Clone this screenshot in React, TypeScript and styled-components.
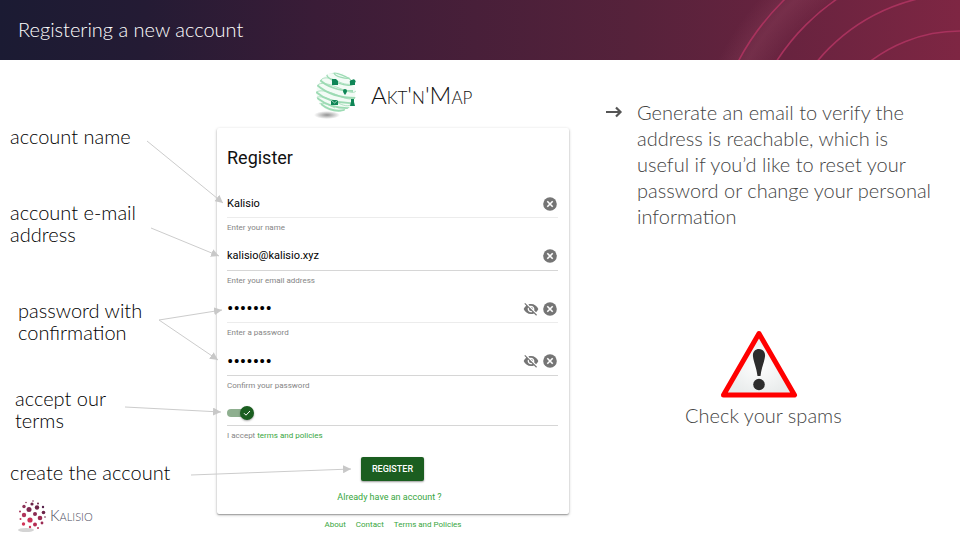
import React, { useState } from "react";
import styled, { createGlobalStyle } from "styled-components";

const GlobalStyle = createGlobalStyle`
  * { box-sizing: border-box; }
  body { margin: 0; background: #fff; font-family: Lato, "Open Sans", sans-serif; }
  #root { overflow-x: hidden; }
`;

const Slide = styled.main`
  min-height: 100vh;
  background: #fff;
`;

const Header = styled.header`
  position: relative;
  display: flex;
  align-items: center;
  height: 60px;
  padding: 0 18px 2px;
  background: linear-gradient(90deg, #1b1b33 0%, #241b34 15%, #3a1c37 33%, #56223b 66%, #68233f 82%, #7e2643 100%);
`;

const Rings = styled.svg`
  position: absolute;
  top: 0;
  right: 0;
`;

const HeaderTitle = styled.h1`
  margin: 0;
  color: #fff;
  font-size: 20px;
  font-weight: 300;
  line-height: 24px;
`;

const Body = styled.div`
  position: relative;
  display: grid;
  grid-template-columns: 217fr 352fr 391fr;
`;

const Arrows = styled.svg`
  position: absolute;
  top: 0;
  left: 0;
  width: 100%;
  height: 480px;
  pointer-events: none;
`;

const Notes = styled.section`
  display: flex;
  flex-direction: column;
  align-items: flex-start;
  padding: 65px 0 0 10px;
`;

const Note = styled.p<{ $gap?: number; $indent?: number }>`
  margin: ${(p) => p.$gap ?? 0}px 0 0 ${(p) => p.$indent ?? 0}px;
  color: #000;
  font-size: 20px;
  font-weight: 300;
  line-height: 22px;
  white-space: nowrap;
`;

const Brand = styled.div`
  display: flex;
  align-items: center;
  gap: 2px;
  margin: 16px 0 0 8px;
`;

const BrandName = styled.span`
  padding-bottom: 3px;
  color: #4a4a5c;
  font-size: 15px;
  font-weight: 300;
  line-height: 16px;
  font-variant: small-caps;
`;

const Center = styled.section`
  display: flex;
  flex-direction: column;
  font-family: Roboto, sans-serif;
`;

const AppLogo = styled.div`
  display: flex;
  align-items: center;
  gap: 12px;
  height: 50px;
  margin: 10px 0 8px 96px;
`;

const AppName = styled.span`
  color: #111;
  font-family: Lato, sans-serif;
  font-size: 24px;
  font-weight: 300;
  line-height: 26px;
  font-variant: small-caps;
`;

const Card = styled.form`
  display: flex;
  flex-direction: column;
  padding: 16px 11px 9px 10px;
  border-radius: 2px;
  background: #fff;
  box-shadow: 0 1px 3px rgba(0, 0, 0, 0.3), 0 1px 1px rgba(0, 0, 0, 0.2);
`;

const CardTitle = styled.h2`
  margin: 0 0 18px;
  color: #111;
  font-size: 18px;
  font-weight: 400;
  line-height: 28px;
`;

const Fields = styled.div`
  display: grid;
  grid-auto-rows: 1fr;
  min-height: 210px;
`;

const Control = styled.div<{ $height: number; $faint?: boolean }>`
  display: flex;
  align-items: center;
  gap: 4px;
  height: ${(p) => p.$height}px;
  padding-right: 1px;
  border-bottom: 1px solid ${(p) => (p.$faint ? "#ececec" : "#d6d6d6")};
`;

const TextInput = styled.input`
  flex: 1;
  min-width: 0;
  padding: 0;
  border: 0;
  outline: 0;
  background: none;
  color: #000;
  font: 400 11px/16px Roboto, sans-serif;
  &[type="password"] { font-size: 19px; }
`;

const IconButton = styled.button`
  display: flex;
  padding: 0;
  border: 0;
  background: none;
  color: #757575;
  cursor: pointer;
`;

const Hint = styled.label`
  display: block;
  color: #858585;
  font-size: 8px;
  line-height: 20px;
`;

const Link = styled.a`
  color: #38a63d;
  text-decoration: none;
`;

const Switch = styled.input`
  appearance: none;
  position: relative;
  width: 27px;
  height: 14px;
  margin: 0;
  cursor: pointer;
  &::before {
    content: "";
    position: absolute;
    inset: 3px 1px 3px 0;
    border-radius: 4px;
    background: #8eaf8f;
  }
  &::after {
    content: "";
    position: absolute;
    top: 0;
    right: 0;
    width: 14px;
    height: 14px;
    border-radius: 50%;
    background: #1b5e20;
    box-shadow: 0 1px 2px rgba(0, 0, 0, 0.35);
  }
  &:not(:checked)::after { right: 13px; background: #999; }
`;

const SwitchBox = styled.span`
  position: relative;
  display: flex;
`;

const Tick = styled.svg`
  position: absolute;
  top: 3px;
  right: 3px;
  pointer-events: none;
`;

const Submit = styled.button`
  align-self: center;
  height: 24px;
  margin-top: 11px;
  padding: 0 11px;
  border: 0;
  border-radius: 2px;
  background: #1b5e20;
  box-shadow: 0 1px 2px rgba(0, 0, 0, 0.4);
  color: #fff;
  font: 500 9px/24px Roboto, sans-serif;
  cursor: pointer;
`;

const Login = styled(Link)`
  align-self: center;
  margin: 8px 6px 0 0;
  font-size: 9px;
  line-height: 16px;
`;

const FooterLinks = styled.nav`
  display: flex;
  justify-content: center;
  gap: 10px;
  padding-top: 3px;
  font-size: 8px;
  line-height: 16px;
`;

const Aside = styled.section`
  display: flex;
  flex-direction: column;
  padding: 39px 20px 0 36px;
  color: #444;
  font-weight: 300;
`;

const BulletList = styled.ul`
  margin: 0;
  padding: 0;
  list-style: none;
`;

const Bullet = styled.li`
  display: flex;
  gap: 14px;
  font-size: 20px;
  line-height: 26px;
`;

const BulletArrow = styled.svg`
  flex: none;
  margin-top: 4px;
`;

const Warning = styled.figure`
  display: flex;
  flex-direction: column;
  align-items: flex-start;
  margin: 101px 0 0 80px;
`;

const Sign = styled.svg`
  margin-left: 35px;
`;

const Caption = styled.figcaption`
  margin-top: 4px;
  font-size: 20px;
  line-height: 26px;
  white-space: nowrap;
`;

const ClearIcon = () => (
  <svg width="14" height="14" viewBox="0 0 14 14" aria-hidden="true">
    <circle cx="7" cy="7" r="6.8" fill="currentColor" />
    <path d="M4.3 4.3l5.4 5.4M9.7 4.3L4.3 9.7" stroke="#fff" strokeWidth="1.6" />
  </svg>
);

const HiddenIcon = () => (
  <svg width="16" height="16" viewBox="0 0 24 24" fill="currentColor" aria-hidden="true">
    <path d="M12 7c2.76 0 5 2.24 5 5 0 .65-.13 1.26-.36 1.83l2.92 2.92c1.51-1.26 2.7-2.89 3.43-4.75-1.73-4.39-6-7.5-11-7.5-1.4 0-2.74.25-3.98.7l2.16 2.16C10.74 7.13 11.35 7 12 7zM2 4.27l2.28 2.28.46.46C3.08 8.3 1.78 10.02 1 12c1.73 4.39 6 7.5 11 7.5 1.55 0 3.03-.3 4.38-.84l.42.42L19.73 22 21 20.73 3.27 3 2 4.27zM7.53 9.8l1.55 1.55c-.05.21-.08.43-.08.65 0 1.66 1.34 3 3 3 .22 0 .44-.03.65-.08l1.55 1.55c-.67.33-1.41.53-2.2.53-2.76 0-5-2.24-5-5 0-.79.2-1.53.53-2.2zm4.31-.78l3.15 3.15.02-.16c0-1.66-1.34-3-3-3l-.17.01z" />
  </svg>
);

const Globe = () => (
  <svg width="46" height="50" viewBox="0 0 46 50" aria-hidden="true">
    <defs>
      <radialGradient id="globeShadow">
        <stop offset="0" stopColor="#777" stopOpacity=".8" />
        <stop offset="1" stopColor="#777" stopOpacity="0" />
      </radialGradient>
      <clipPath id="globeClip">
        <circle cx="23" cy="22.500" r="20" />
      </clipPath>
    </defs>
    <ellipse cx="14" cy="45" rx="13" ry="4" fill="url(#globeShadow)" />
    <circle cx="23" cy="22.500" r="19.500" fill="#f3fbf6" />
    <g clipPath="url(#globeClip)" fill="none" stroke="#9ddbb4" strokeWidth="1.3">
      <ellipse cx="29" cy="5" rx="8" ry="2.500" transform="rotate(16 29 5)" />
      <ellipse cx="27" cy="9" rx="14" ry="4.500" transform="rotate(20 27 9)" />
      <path d="M7 10c6 6 18 11 33 11M4 15c8 7 21 13 39 13M3 22c8 7 20 12 39 11M4 28c8 6 19 11 34 10M8 34c6 5 15 8 24 6" strokeWidth="1.8" />
      <path d="M4 16c3-5 12-2 22 2s14 6 17 3M3 23c2-4 12-2 21 2s14 5 19 3M3 28c3-3 12 0 20 4s12 5 16 2" strokeWidth=".8" />
      <path d="M8 10c2-3 8-3 16 1s13 4 16 2M6 34c4-2 10 1 16 4" strokeWidth=".8" />
    </g>
    <g fill="#0f8657">
      <path d="M19 9h4l2 2v4h-6z" />
      <path d="M37 13a2 2 0 0 1 2-3 2 2 0 0 1 3 3v2h-5z" />
      <path d="M32 19a2 2 0 0 1 2 2c0 1.500-2 4-2 4s-2-2.500-2-4a2 2 0 0 1 2-2z" />
      <path d="M18 30h7v5h-7z" />
      <path d="M38 29h3v3l1 4h-5l1-4z" />
    </g>
    <path d="M18 30l3.500 3 3.500-3" fill="none" stroke="#d8f0e2" strokeWidth=".7" />
  </svg>
);

const kalisioDots: [number, number, number, string][] = [
  [15, 2, 0.8, "#7b2a52"], [8, 3.5, 0.8, "#8d3358"], [14, 5, 1.6, "#6c2348"], [20, 4.5, 1, "#6c2348"],
  [6, 7.5, 1.7, "#8d3358"], [19, 8.5, 2.2, "#6c2348"], [11, 10.5, 2.5, "#7f2850"], [2, 12.5, 1, "#a53459"],
  [25, 8, 1.2, "#57204a"], [17, 15, 2, "#8b2a52"], [25.5, 13.5, 1.8, "#6c2348"], [6, 16, 2.2, "#b0355b"],
  [12, 21, 2.6, "#c92f55"], [22, 19, 2.3, "#9b2b52"], [2.5, 20, 1, "#c03459"],
  [5.5, 25, 1.7, "#d23558"], [17, 25.5, 2, "#b52c53"], [12, 28, 1.2, "#d23558"], [27, 18, 0.8, "#6c2348"],
  [24, 24, 1.4, "#9b2b52"], [20, 29, 1, "#b52c53"],
];

const KalisioMark = () => (
  <svg width="30" height="34" viewBox="0 0 30 34" aria-hidden="true">
    <ellipse cx="8" cy="31" rx="8" ry="2" fill="#d4d4d4" />
    {kalisioDots.map(([x, y, r, fill], i) => (
      <circle key={i} cx={x} cy={y} r={r} fill={fill} />
    ))}
  </svg>
);

const arrowLines = [
  [147, 81, 223, 143],
  [151, 168, 219, 196],
  [159, 260, 222, 250],
  [159, 260, 218, 300],
  [125, 347, 221, 352],
  [191, 415, 351, 409],
];

const fields = [
  { id: "name", type: "text", value: "Kalisio", hint: "Enter your name", faint: true },
  { id: "email", type: "email", value: "kalisio@kalisio.xyz", hint: "Enter your email address" },
  { id: "password", type: "password", value: "kalisio", hint: "Enter a password", faint: true },
  { id: "confirm", type: "password", value: "kalisio", hint: "Confirm your password" },
];

function Field({ id, type, value, hint, faint }: (typeof fields)[number]) {
  const [text, setText] = useState(value);
  const [shown, setShown] = useState(false);
  const secret = type === "password";
  return (
    <div>
      <Control $height={28} $faint={faint}>
        <TextInput id={id} type={shown ? "text" : type} value={text} onChange={(e) => setText(e.target.value)} />
        {secret && (
          <IconButton type="button" aria-label="Show password" onClick={() => setShown(!shown)}>
            <HiddenIcon />
          </IconButton>
        )}
        <IconButton type="button" aria-label="Clear" onClick={() => setText("")}>
          <ClearIcon />
        </IconButton>
      </Control>
      <Hint htmlFor={id}>{hint}</Hint>
    </div>
  );
}

export default function App() {
  return (
    <>
      <GlobalStyle />
      <Slide>
        <Header>
          <Rings width="260" height="60" viewBox="700 0 260 60" fill="none" stroke="#a8325d" strokeWidth="1.6" aria-hidden="true">
            <defs>
              <radialGradient id="ringGlow" gradientUnits="userSpaceOnUse" cx="960" cy="179" r="270">
                <stop offset=".8" stopColor="#a0506a" stopOpacity="0" />
                <stop offset=".9" stopColor="#a0506a" stopOpacity=".26" />
                <stop offset="1" stopColor="#a0506a" stopOpacity="0" />
              </radialGradient>
            </defs>
            <path d="M700 0h140v60H700z" fill="url(#ringGlow)" stroke="none" />
            {[148, 185, 218, 251].map((r) => (
              <circle key={r} cx="960" cy="179" r={r} />
            ))}
          </Rings>
          <HeaderTitle>Registering a new account</HeaderTitle>
        </Header>
        <Body>
          <Notes>
            <Note>account name</Note>
            <Note $gap={54}>account e-mail<br />address</Note>
            <Note $gap={54} $indent={8}>password with<br />confirmation</Note>
            <Note $gap={44} $indent={5}>accept our<br />terms</Note>
            <Note $gap={30}>create the account</Note>
            <Brand>
              <KalisioMark />
              <BrandName>Kalisio</BrandName>
            </Brand>
          </Notes>
          <Center>
            <AppLogo>
              <Globe />
              <AppName>Akt'n'Map</AppName>
            </AppLogo>
            <Card onSubmit={(e) => e.preventDefault()}>
              <CardTitle>Register</CardTitle>
              <Fields>
                {fields.map((f) => (
                  <Field key={f.id} {...f} />
                ))}
              </Fields>
              <Control $height={26}>
                <SwitchBox>
                  <Switch id="terms" type="checkbox" role="switch" defaultChecked />
                  <Tick width="8" height="8" viewBox="0 0 8 8" fill="none" stroke="#fff" aria-hidden="true">
                    <path d="M1 4.200l2 2 4-4.200" />
                  </Tick>
                </SwitchBox>
              </Control>
              <Hint htmlFor="terms">
                I accept <Link href="#terms">terms and policies</Link>
              </Hint>
              <Submit type="submit">REGISTER</Submit>
              <Login href="#login">Already have an account ?</Login>
            </Card>
            <FooterLinks>
              <Link href="#about">About</Link>
              <Link href="#contact">Contact</Link>
              <Link href="#policies">Terms and Policies</Link>
            </FooterLinks>
          </Center>
          <Aside>
            <BulletList>
              <Bullet>
                <BulletArrow width="18" height="18" viewBox="0 0 18 18" fill="none" stroke="#555" strokeWidth="2.2" aria-hidden="true">
                  <path d="M1 9h14.500M11 4.500L15.500 9 11 13.500" />
                </BulletArrow>
                <span>
                  Generate an email to verify the<br />address is reachable, which is<br />useful if you’d like to reset your<br />
                  password or change your personal<br />information
                </span>
              </Bullet>
            </BulletList>
            <Warning>
              <Sign width="78" height="68" viewBox="0 0 78 68" role="img" aria-label="Warning">
                <defs>
                  <radialGradient id="signFill">
                    <stop offset="0" stopColor="#fff" />
                    <stop offset="1" stopColor="#e9ecec" />
                  </radialGradient>
                </defs>
                <path d="M39 3.500L74.500 65H3.500z" fill="url(#signFill)" stroke="#f00" strokeWidth="5" strokeLinejoin="round" />
                <path d="M39 19c4 0 6.500 3 6 7.500-.5 5-3.500 11-4.500 19.500h-3c-1-8.500-4-14.500-4.500-19.500-.5-4.500 2-7.500 6-7.500z" fill="#2d2d2d" />
                <circle cx="39" cy="54.500" r="5.800" fill="#2d2d2d" />
              </Sign>
              <Caption>Check your spams</Caption>
            </Warning>
          </Aside>
          <Arrows viewBox="0 0 960 480" preserveAspectRatio="none" aria-hidden="true">
            <defs>
              <marker id="head" viewBox="0 0 8 8" refX="8" refY="4" markerWidth="8" markerHeight="8" markerUnits="userSpaceOnUse" orient="auto">
                <path d="M0 0l8 4-8 4z" fill="#c8c8c8" />
              </marker>
            </defs>
            {arrowLines.map(([x1, y1, x2, y2], i) => (
              <line key={i} x1={x1} y1={y1} x2={x2} y2={y2} stroke="#ccc" markerEnd="url(#head)" />
            ))}
          </Arrows>
        </Body>
      </Slide>
    </>
  );
}
